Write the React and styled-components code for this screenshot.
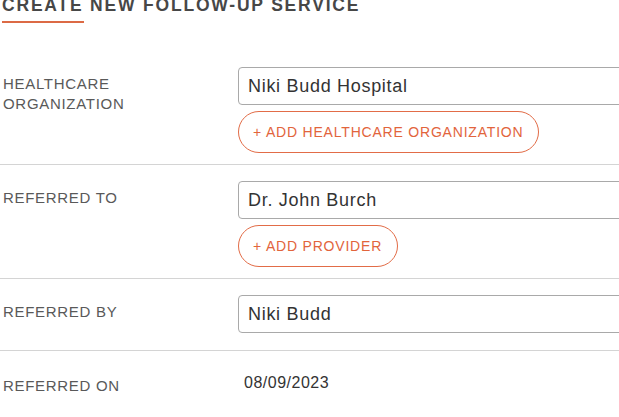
import React from 'react'
import styled, { createGlobalStyle } from 'styled-components'

const GlobalStyle = createGlobalStyle`
  html, body {
    margin: 0;
    padding: 0;
    background: #fff;
    overflow: hidden;
  }

  body {
    font-family: "Liberation Sans", Arial, sans-serif;
  }
`

const rows = [
  {
    label: ['HEALTHCARE', 'ORGANIZATION'],
    value: 'Niki Budd Hospital',
    action: '+ ADD HEALTHCARE ORGANIZATION',
  },
  {
    label: ['REFERRED TO'],
    value: 'Dr. John Burch',
    action: '+ ADD PROVIDER',
  },
  {
    label: ['REFERRED BY'],
    value: 'Niki Budd',
  },
]

export const App = () => (
  <Page>
    <GlobalStyle />
    <Title>Create New Follow-up Service</Title>
    <TitleBar />
    <Form>
      {rows.map((row) => (
        <Row key={row.value}>
          <Label>
            {row.label.map((line) => (
              <span key={line}>{line}</span>
            ))}
          </Label>
          <Field>
            <Input defaultValue={row.value} readOnly />
            {row.action && <AddButton type="button">{row.action}</AddButton>}
          </Field>
        </Row>
      ))}
      <Row last>
        <Label low>REFERRED ON</Label>
        <Field>
          <DateText>08/09/2023</DateText>
        </Field>
      </Row>
    </Form>
  </Page>
)

export default App

/**
 * --------------------------------------------------------
 * UI
 * --------------------------------------------------------
 */
const Page = styled.div`
  padding-left: 2px;
  width: 700px;
`

const Title = styled.h1`
  margin: -5px 0 0;
  font-family: "Liberation Sans", Arial, sans-serif;
  font-size: 17.5px;
  line-height: 20px;
  font-weight: 700;
  letter-spacing: 1.8px;
  text-transform: uppercase;
  color: #474747;
`

const TitleBar = styled.div`
  width: 82px;
  height: 2px;
  margin-top: 6px;
  background: #dc6a45;
`

const Form = styled.div`
  margin-top: 28px;
  margin-left: -2px;
`

const Row = styled.div`
  display: flex;
  padding: 16px 0 ${(p) => (p.last ? '0' : '11px')};
  border-bottom: ${(p) => (p.last ? 'none' : '1px solid #d4d4d4')};
`

const Label = styled.div`
  width: 235px;
  flex-shrink: 0;
  padding: ${(p) => (p.low ? '9px' : '7px')} 0 0 3px;
  font-size: 15px;
  line-height: 20px;
  letter-spacing: 0.7px;
  color: #595959;

  > span {
    display: block;
  }
`

const Field = styled.div`
  display: flex;
  flex-direction: column;
  align-items: flex-start;
`

const Input = styled.input`
  box-sizing: border-box;
  width: 420px;
  height: 38px;
  margin: 0 0 6px;
  padding: 0 9px;
  border: 1px solid #a9a9a9;
  border-radius: 4px;
  font-family: "Liberation Sans", Arial, sans-serif;
  font-size: 18px;
  letter-spacing: 0.7px;
  color: #333;
  background: #fff;
  outline: none;
`

const AddButton = styled.button`
  box-sizing: border-box;
  height: 42px;
  padding: 0 15px 0 14px;
  border: 1px solid #e26c47;
  border-radius: 21px;
  background: #fff;
  font-family: "Liberation Sans", Arial, sans-serif;
  font-size: 14px;
  letter-spacing: 0.8px;
  color: #e2643c;
  cursor: pointer;
`

const DateText = styled.div`
  padding: 6px 0 0 6px;
  font-size: 16px;
  line-height: 20px;
  letter-spacing: 0.5px;
  color: #333;
`
